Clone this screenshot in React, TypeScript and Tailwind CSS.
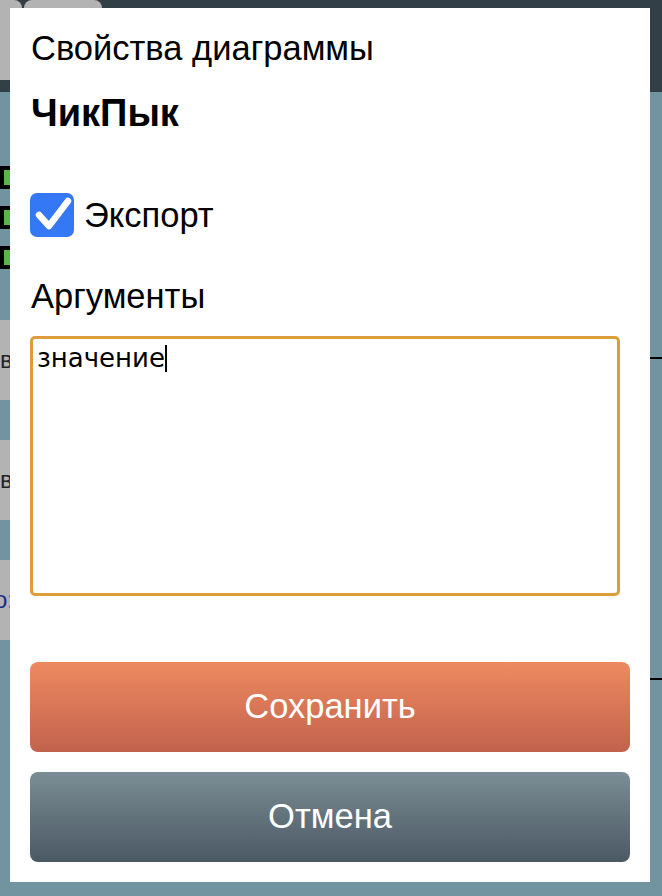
import React from "react";

const font = { fontFamily: '"Liberation Sans", Arial, sans-serif' };

function GreenBox() {
  return (
    <div className="w-[22px] h-[23px] bg-black p-[4px]">
      <div className="h-full w-full bg-[#5bb548]" />
    </div>
  );
}

function GrayCard({ children }: { children?: React.ReactNode }) {
  return (
    <div className="h-[80px] w-[140px] bg-[#b3b3b3] flex items-center text-[24px] text-[#222]">
      {children}
    </div>
  );
}

function Background() {
  return (
    <div className="flex flex-col h-full">
      <header className="h-[92px] shrink-0 bg-[#333f47] flex gap-[2px]">
        <div className="h-[80px] w-[22px] rounded-tr-lg rounded-br-lg bg-[#b3b3b3] flex items-center justify-end overflow-hidden">
          <span className="text-[34px] leading-none text-[#444] -mr-[16px]">✕</span>
        </div>
        <div className="h-[80px] w-[78px] rounded-lg bg-[#b3b3b3]" />
      </header>
      <div className="flex flex-1 bg-[#7194a0]">
        <div className="w-[140px] flex flex-col">
          <div className="mt-[74px] flex flex-col gap-[17px]">
            <GreenBox />
            <GreenBox />
            <GreenBox />
          </div>
          <div className="mt-[51px] flex flex-col gap-[40px]">
            <GrayCard>в</GrayCard>
            <GrayCard>в</GrayCard>
            <GrayCard>
              <span className="text-[#1a2f8a] -ml-[6px]">о:</span>
            </GrayCard>
          </div>
        </div>
        <div className="flex-1 flex flex-col">
          <div className="mt-[265px] border-t-2 border-black" />
          <div className="mt-[319px] border-t-2 border-black" />
        </div>
      </div>
    </div>
  );
}

function Check() {
  return (
    <div className="h-[44px] w-[44px] rounded-[7px] bg-[#3478f6] flex items-center justify-center">
      <svg width="44" height="44" viewBox="0 0 44 44">
        <path d="M9 22 L19 33 L38 8" fill="none" stroke="white" strokeWidth="6.5" strokeLinecap="round" strokeLinejoin="round" />
      </svg>
    </div>
  );
}

export default function App() {
  return (
    <div className="relative w-[662px] h-[896px] overflow-hidden" style={font}>
      <Background />
      <div className="absolute left-[10px] top-[8px] w-[640px] h-[874px] bg-white flex flex-col px-5 text-black">
        <h2 className="mt-[20px] pl-[1px] text-[34.5px] leading-[40px]">Свойства диаграммы</h2>
        <div className="mt-[25px] pl-[1px] text-[38px] leading-[40px] font-bold">ЧикПык</div>
        <label className="mt-[60px] flex items-center gap-[10px] h-[44px]">
          <Check />
          <span className="text-[34.5px] leading-[40px]">Экспорт</span>
        </label>
        <div className="mt-[39px] pl-[1px] text-[34.5px] leading-[40px]">Аргументы</div>
        <div className="mt-[20px] h-[260px] w-[590px] rounded-[5px] border-[3px] border-[#dc9e3a] px-[4px] py-[4px]">
          <div
            className="text-[26px] leading-[30px] flex items-center"
            style={{ fontFamily: '"DejaVu Sans", sans-serif' }}
          >
            значение
            <span className="inline-block w-[2px] h-[27px] bg-black" />
          </div>
        </div>
        <button className="mt-[66px] h-[90px] w-full rounded-[8px] bg-gradient-to-b from-[#ee8a60] to-[#c2624d] text-white text-[34.5px]">
          Сохранить
        </button>
        <button className="mt-[20px] h-[90px] w-full rounded-[8px] bg-gradient-to-b from-[#7b8d95] to-[#4b5963] text-white text-[34.5px]">
          Отмена
        </button>
      </div>
    </div>
  );
}
